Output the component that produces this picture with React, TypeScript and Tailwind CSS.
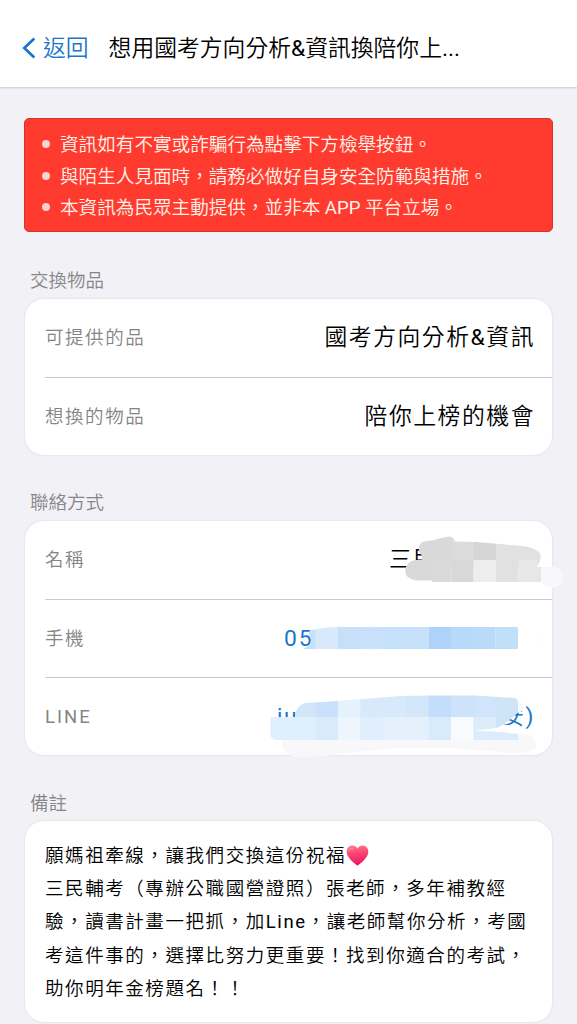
import type { ReactNode } from "react";

function Mixed({ text }: { text: string }) {
  return (
    <>
      {text.split(/([A-Za-z0-9&.]+)/).map((part, i) =>
        i % 2 === 1 ? (
          <span key={i} className="font-normal">
            {part}
          </span>
        ) : (
          part
        ),
      )}
    </>
  );
}

function SectionTitle({ children }: { children: ReactNode }) {
  return (
    <h2 className="ml-[30px] h-[18px] text-[18.5px] leading-[18px] text-[#86868a]">
      {children}
    </h2>
  );
}

function Card({ children, className = "" }: { children: ReactNode; className?: string }) {
  return (
    <section
      className={`relative mx-6 rounded-[20px] border border-[#e9e9ec] bg-white shadow-[0_0_2px_rgba(0,0,0,0.04)] ${className}`}
    >
      {children}
    </section>
  );
}

function Row({
  label,
  value,
  link = false,
  first = false,
  last = false,
}: {
  label: string;
  value: ReactNode;
  link?: boolean;
  first?: boolean;
  last?: boolean;
}) {
  const height = first ? "h-[79px] border-b" : last ? "h-[77px]" : "h-[78px] border-b";
  return (
    <div
      className={`ml-5 flex items-center justify-between border-[#cbcbce] pr-[17px] tracking-[1.55px] ${height}`}
    >
      <span className={`text-[18.5px] leading-6 text-[#858585] ${/[A-Z]/.test(label) ? "tracking-[2px]" : ""}`}>
        <Mixed text={label} />
      </span>
      <span className={`text-[22.8px] leading-7 ${link ? "text-[#1976cd]" : "text-black"}`}>
        {value}
      </span>
    </div>
  );
}

function Heart() {
  return (
    <svg className="inline-block h-[21px] w-[23px] align-[-4px]" viewBox="0 0 23 21">
      <defs>
        <linearGradient id="heart" x1="0" y1="0" x2="0.15" y2="1">
          <stop offset="0" stopColor="#ff7f91" />
          <stop offset="0.45" stopColor="#fb4470" />
          <stop offset="1" stopColor="#ef1763" />
        </linearGradient>
      </defs>
      <path
        d="M11.500 3.600C9.800.4 5.600-.4 2.900 1.700.1 4 .2 8.200 2 11.300c2 3.500 5.600 6.900 9.500 9.400 3.900-2.500 7.500-5.900 9.500-9.400 1.800-3.100 1.900-7.300-.9-9.600C17.400-.4 13.200.4 11.500 3.600Z"
        fill="url(#heart)"
      />
      <path d="M3 6c.4-2 2.300-3.200 4.200-2.500" stroke="#ffa9b5" strokeWidth="1.200" fill="none" strokeLinecap="round" opacity=".6" />
    </svg>
  );
}

function Redaction() {
  return (
    <svg
      className="pointer-events-none absolute top-[9px] left-[235px] h-[230px] w-[317px]"
      viewBox="260 530 317 230"
      aria-hidden="true"
    >
      <defs>
        <clipPath id="name-top">
          <path d="M422 560V556Q416 549 421 543Q424 541 428 541L434 540Q442 537 449 536.500Q454 537 455 541.500L476 542L500 544L522 546Q538 548 540.500 555Q541 564 535 568H422Z" />
        </clipPath>
        <clipPath id="name-bottom">
          <path d="M416 560H537V567H541V582H432V580.500H416Q405.500 579 405.200 571Q406 561 416 560Z" />
        </clipPath>
        <clipPath id="phone">
          <path d="M304 649V648Q311 646 311 639Q306 631 312 630Q323 627 338 627H518V649Z" />
        </clipPath>
        <clipPath id="line-top">
          <path d="M295 717.500Q295 706 305 703L338 701L400 696L430 695.500H475L515 698Q518 699 518 703V712Q514 717 508 721Q502 728 488 729H295Z" />
        </clipPath>
        <clipPath id="line-bottom">
          <path d="M270.500 717H507Q504 726 489 729L474 731Q500 731 518 734V740H278Q270.500 740 270.500 734Z" />
        </clipPath>
      </defs>

      <g clipPath="url(#name-top)">
        <path d="M416 535h36v35h-36z" fill="#d9d9d9" />
        <path d="M451.700 535h22v35h-22z" fill="#dcdcdc" />
        <path d="M473.300 535H496v35h-22.700z" fill="#d5d5d5" />
        <path d="M496 535h46v35h-46z" fill="#e1e1e1" />
      </g>
      <g clipPath="url(#name-bottom)">
        <path d="M404 560h28v22h-28z" fill="#d9d9d9" />
        <path d="M431.700 560h20v22h-20z" fill="#dadada" />
        <path d="M451.700 560h22v22h-22z" fill="#d8d8d8" />
        <path d="M473.300 560H496v22h-22.700z" fill="#ededed" />
        <path d="M496 560h22.300v22H496z" fill="#e1e1e1" />
        <path d="M518.300 560H541v22h-22.700z" fill="#e7e7e7" />
      </g>
      <path d="M541 567h14q8 2 8.500 11-1 9-11 10-7 0-11.500-6z" fill="#f8f8fb" />

      <g clipPath="url(#phone)">
        <path d="M300 627h16v22h-16z" fill="#c8e1fa" />
        <path d="M315.500 627h23v22h-23z" fill="#d8e9fb" />
        <path d="M338 627h23v22h-23z" fill="#c6e0fa" />
        <path d="M360.500 627h23v22h-23z" fill="#c9e1fa" />
        <path d="M383 627h23v22h-23z" fill="#c5e0fb" />
        <path d="M405.500 627h23v22h-23z" fill="#c8e1fb" />
        <path d="M428.500 627h23v22h-23z" fill="#aed2f9" />
        <path d="M451 627h23v22h-23z" fill="#b7d9fa" />
        <path d="M473.500 627h22v22h-22z" fill="#b9daf9" />
        <path d="M495.500 627H518v22h-22.500z" fill="#c0dff9" />
      </g>
      <ellipse cx="541" cy="639" rx="1" ry="3" fill="#fbfbfd" />

      <path d="M480 723L508 725L523 729V735H480Z" fill="#fff" />
      <path d="M518 700Q524 703 523 711L514 714V700Z" fill="#f7fbfe" />
      <path
        d="M283 739L480 733Q520 732 532 736Q538 742 535 749Q530 753 514 753L450 748H400L345 753Q325 757 304 757Q289 758 285 751Q280 747 283 739Z"
        fill="#f8f8fb"
      />
      <g clipPath="url(#line-bottom)">
        <path d="M270 717h46v23h-46z" fill="#e0effc" />
        <path d="M315.500 717h23v23h-23z" fill="#d9ebfb" />
        <path d="M338 717h22.500v23H338z" fill="#edf6fd" />
        <path d="M360 717h23.500v23H360z" fill="#e0effc" />
        <path d="M383 717h46v23h-46z" fill="#e4f0fc" />
        <path d="M428.500 717h23v23h-23z" fill="#d8ebfc" />
        <path d="M451 717h23v23h-23z" fill="#f9fbfe" />
        <path d="M473.500 717H536v23h-62.500z" fill="#dcecfc" />
      </g>
      <g clipPath="url(#line-top)">
        <path d="M294 695h22v22h-22z" fill="#d2e6fa" />
        <path d="M315.500 695h23v22h-23z" fill="#c9e1fa" />
        <path d="M338 695h23v22h-23z" fill="#e5f1fc" />
        <path d="M360.500 695h45.500v22h-45.500z" fill="#d7e9fb" />
        <path d="M405.500 695h23.500v22h-23.500z" fill="#d3e7fb" />
        <path d="M428.500 695h23v22h-23z" fill="#c3defb" />
        <path d="M451 695h23v22h-23z" fill="#cde3fb" />
        <path d="M473.500 695h22.500v22h-22.500z" fill="#d0e5fb" />
        <path d="M495.500 695H518v35h-22.500z" fill="#d0e4f8" />
        <path d="M473.500 717H496v13h-22.500z" fill="#dcecfb" />
      </g>
    </svg>
  );
}

const warnings = [
  "資訊如有不實或詐騙行為點擊下方檢舉按鈕。",
  "與陌生人見面時，請務必做好自身安全防範與措施。",
  "本資訊為民眾主動提供，並非本 APP 平台立場。",
];

const notes = [
  "三民輔考（專辦公職國營證照）張老師，多年補教經",
  "驗，讀書計畫一把抓，加Line，讓老師幫你分析，考國",
  "考這件事的，選擇比努力更重要！找到你適合的考試，",
  "助你明年金榜題名！！",
];

export default function App() {
  return (
    <div
      lang="zh-TW"
      className="h-[1024px] w-[577px] overflow-hidden bg-[#f2f1f6] font-[Roboto,'Noto_Sans_CJK_TC',sans-serif] font-[350]"
    >
      <header className="relative flex h-[87px] items-center bg-white pt-[10px] pl-[22px] text-[22.8px] leading-8 shadow-[0_1px_2px_rgba(0,0,0,0.16)]">
        <svg className="mr-[7px] mb-[2px] h-[22px] w-[14px]" viewBox="0 0 14 22" fill="none" stroke="#1976cd" strokeWidth="2.700">
          <path d="M12.300 1.500 2.300 11l10 9.500" />
        </svg>
        <span className="text-[#1976cd]">返回</span>
        <h1 className="ml-[20px] font-[350]">
          <Mixed text="想用國考方向分析&資訊換陪你上..." />
        </h1>
      </header>

      <ul className="mx-6 mt-[31px] flex h-[114px] flex-col justify-center rounded-[5px] border border-[#d7322b] bg-[#ff3b30] pt-1 text-[18.6px] text-[#fff3e9]">
        {warnings.map((warning) => (
          <li key={warning} className="flex h-[31.200px] items-center pl-[17px] leading-[31px]">
            <span className="mr-[10px] mb-[3px] size-2 rounded-full bg-[#ffd0cc]" />
            <span>
              <Mixed text={warning} />
            </span>
          </li>
        ))}
      </ul>

      <div className="mt-[40px]">
        <SectionTitle>交換物品</SectionTitle>
      </div>
      <Card className="mt-[8px] h-[158px]">
        <Row label="可提供的品" value={<Mixed text="國考方向分析&資訊" />} first />
        <Row label="想換的物品" value="陪你上榜的機會" last />
      </Card>

      <div className="mt-[38px]">
        <SectionTitle>聯絡方式</SectionTitle>
      </div>
      <Card className="mt-[8px] h-[236px]">
        <Row label="名稱" value={<span className="block w-[146px]">三民</span>} first />
        <Row
          label="手機"
          value={<span className="block w-[251px] font-normal tracking-[2px]">05</span>}
          link
        />
        <Row
          label="LINE"
          value={
            <span className="flex w-[258px] justify-between">
              <span className="font-normal">ju</span>
              <span>
                安<span className="font-normal">)</span>
              </span>
            </span>
          }
          link
          last
        />
        <Redaction />
      </Card>

      <div className="mt-[39px]">
        <SectionTitle>備註</SectionTitle>
      </div>
      <Card className="mt-[7px] h-[203px] pt-[19px] pl-5 text-[18.5px] leading-[33.200px] tracking-[1.57px] whitespace-nowrap text-black">
        <p className="h-[33.200px]">
          願媽祖牽線，讓我們交換這份祝福
          <Heart />
        </p>
        {notes.map((note) => (
          <p key={note}>
            <Mixed text={note} />
          </p>
        ))}
      </Card>
    </div>
  );
}
